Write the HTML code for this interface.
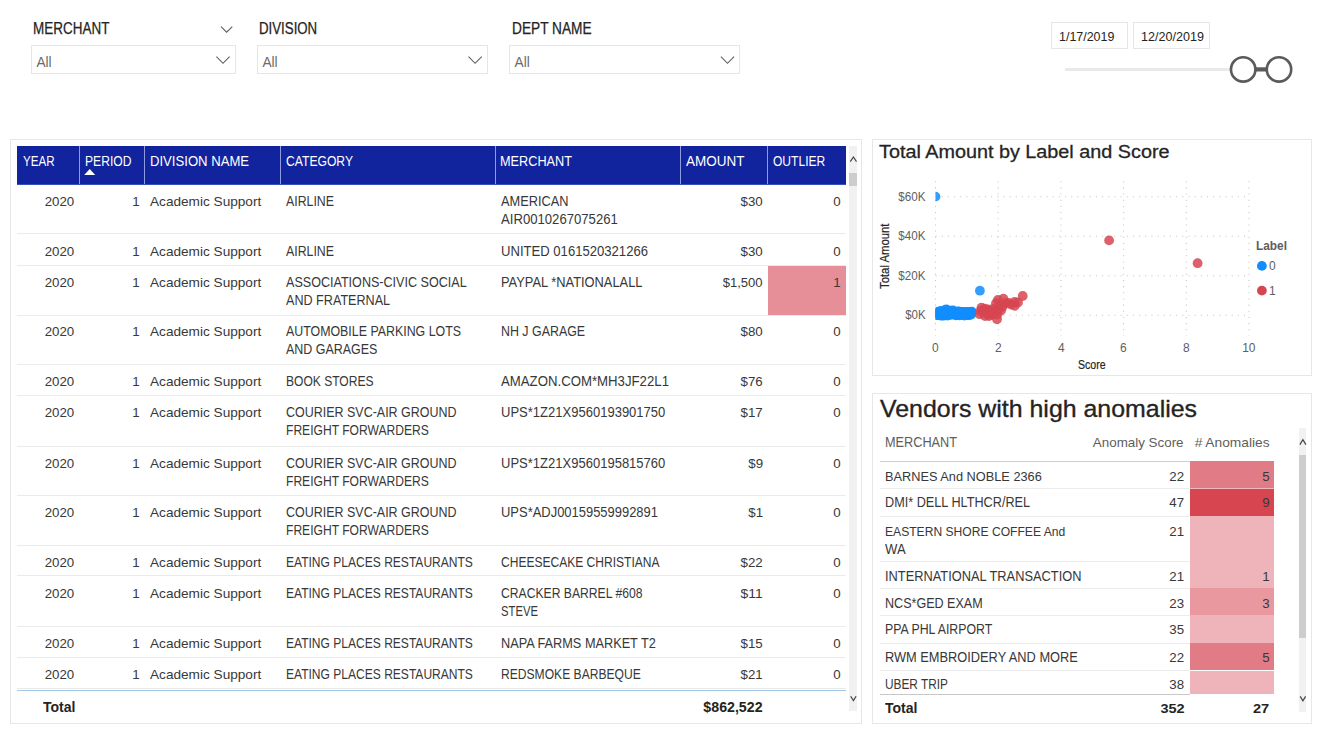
<!DOCTYPE html>
<html><head><meta charset="utf-8"><title>Anomaly dashboard</title>
<style>
html,body{margin:0;padding:0;background:#fff;}
body{width:1317px;height:736px;position:relative;overflow:hidden;font-family:"Liberation Sans",sans-serif;}
.t{position:absolute;white-space:pre;line-height:1;}
</style></head><body>
<div style="position:absolute;left:31.00px;top:45.20px;width:203.30px;height:26.50px;border:1px solid #e6e6e6;background:transparent;"></div>
<div style="position:absolute;left:257.00px;top:45.20px;width:229.00px;height:26.50px;border:1px solid #e6e6e6;background:transparent;"></div>
<div style="position:absolute;left:509.20px;top:45.20px;width:229.00px;height:26.50px;border:1px solid #e6e6e6;background:transparent;"></div>
<svg style="position:absolute;left:200px;top:20px" width="560" height="50" viewBox="200 20 560 50"><path d="M221 26.6 L226.65 32.2 L232.3 26.6" fill="none" stroke="#605e5c" stroke-width="1.1"/><path d="M216.4 56.7 L223.0 63.3 L229.6 56.7" fill="none" stroke="#605e5c" stroke-width="1.1"/><path d="M468.5 56.7 L475.1 63.3 L481.70000000000005 56.7" fill="none" stroke="#605e5c" stroke-width="1.1"/><path d="M720.9 56.7 L727.5 63.3 L734.1 56.7" fill="none" stroke="#605e5c" stroke-width="1.1"/></svg>
<div style="position:absolute;left:1050.60px;top:22.40px;width:75.00px;height:24.40px;border:1px solid #e6e6e6;background:transparent;"></div>
<div style="position:absolute;left:1133.10px;top:22.40px;width:74.90px;height:24.40px;border:1px solid #e6e6e6;background:transparent;"></div>
<svg style="position:absolute;left:1050px;top:50px" width="260" height="40" viewBox="1050 50 260 40"><rect x="1064.8" y="67.9" width="168" height="3.2" rx="1.6" fill="#e9e9e9"/><rect x="1254" y="67.3" width="14" height="4.2" fill="#5b5b5b"/><circle cx="1243.2" cy="69.4" r="12.2" fill="#fff" stroke="#5b5b5b" stroke-width="2.6"/><circle cx="1279.0" cy="69.4" r="12.2" fill="#fff" stroke="#5b5b5b" stroke-width="2.6"/></svg>
<div style="position:absolute;left:10.00px;top:139.20px;width:850.00px;height:583.20px;border:1px solid #e7e7e7;background:transparent;"></div>
<div style="position:absolute;left:17.40px;top:145.90px;width:828.60px;height:38.60px;background:#12239e;"></div>
<div style="position:absolute;left:17.40px;top:183.70px;width:828.60px;height:0.90px;background:#3550bd;"></div>
<div style="position:absolute;left:78.80px;top:145.90px;width:1.00px;height:38.60px;background:#8c9be2;"></div>
<div style="position:absolute;left:143.80px;top:145.90px;width:1.00px;height:38.60px;background:#8c9be2;"></div>
<div style="position:absolute;left:279.80px;top:145.90px;width:1.00px;height:38.60px;background:#8c9be2;"></div>
<div style="position:absolute;left:494.90px;top:145.90px;width:1.00px;height:38.60px;background:#8c9be2;"></div>
<div style="position:absolute;left:679.90px;top:145.90px;width:1.00px;height:38.60px;background:#8c9be2;"></div>
<div style="position:absolute;left:767.00px;top:145.90px;width:1.00px;height:38.60px;background:#8c9be2;"></div>
<svg style="position:absolute;left:80px;top:165px" width="20" height="12" viewBox="80 165 20 12"><path d="M84.2 175.1 L89.7 169.0 L95.2 175.1 Z" fill="#fff"/></svg>
<div style="position:absolute;left:17.40px;top:232.50px;width:828.60px;height:1.00px;background:#ebebeb;"></div>
<div style="position:absolute;left:17.40px;top:264.80px;width:828.60px;height:1.00px;background:#ebebeb;"></div>
<div style="position:absolute;left:767.50px;top:265.80px;width:78.50px;height:49.60px;background:#e78f98;"></div>
<div style="position:absolute;left:17.40px;top:314.90px;width:828.60px;height:1.00px;background:#ebebeb;"></div>
<div style="position:absolute;left:17.40px;top:364.00px;width:828.60px;height:1.00px;background:#ebebeb;"></div>
<div style="position:absolute;left:17.40px;top:394.90px;width:828.60px;height:1.00px;background:#ebebeb;"></div>
<div style="position:absolute;left:17.40px;top:446.00px;width:828.60px;height:1.00px;background:#ebebeb;"></div>
<div style="position:absolute;left:17.40px;top:495.10px;width:828.60px;height:1.00px;background:#ebebeb;"></div>
<div style="position:absolute;left:17.40px;top:544.80px;width:828.60px;height:1.00px;background:#ebebeb;"></div>
<div style="position:absolute;left:17.40px;top:574.80px;width:828.60px;height:1.00px;background:#ebebeb;"></div>
<div style="position:absolute;left:17.40px;top:625.70px;width:828.60px;height:1.00px;background:#ebebeb;"></div>
<div style="position:absolute;left:17.40px;top:656.50px;width:828.60px;height:1.00px;background:#ebebeb;"></div>
<div style="position:absolute;left:17.40px;top:687.80px;width:828.60px;height:1.00px;background:#e9e9e9;"></div>
<div style="position:absolute;left:17.40px;top:690.00px;width:828.60px;height:1.10px;background:#a3c7e8;"></div>
<div style="position:absolute;left:849.30px;top:146.00px;width:7.30px;height:565.40px;background:#f1f1f1;"></div>
<div style="position:absolute;left:849.30px;top:173.00px;width:7.30px;height:12.80px;background:#cdcdcd;"></div>
<svg style="position:absolute;left:845px;top:150px" width="16" height="560" viewBox="845 150 16 560"><path d="M850.3 161.6 L853.4 157.0 L856.5 161.6" fill="none" stroke="#444" stroke-width="1.2"/><path d="M850.7 696.3 L853.4 700.6 L856.1 696.3" fill="none" stroke="#444" stroke-width="1.2"/></svg>
<div style="position:absolute;left:872.20px;top:139.40px;width:437.60px;height:234.40px;border:1px solid #e7e7e7;background:transparent;"></div>
<svg style="position:absolute;left:873px;top:170px" width="438" height="200" viewBox="873 170 438 200"><line x1="935.50" y1="181.2" x2="935.50" y2="336.0" stroke="#c4c4c4" stroke-width="1.05" stroke-dasharray="1.05 5.12"/><line x1="998.20" y1="181.2" x2="998.20" y2="336.0" stroke="#c4c4c4" stroke-width="1.05" stroke-dasharray="1.05 5.12"/><line x1="1060.90" y1="181.2" x2="1060.90" y2="336.0" stroke="#c4c4c4" stroke-width="1.05" stroke-dasharray="1.05 5.12"/><line x1="1123.60" y1="181.2" x2="1123.60" y2="336.0" stroke="#c4c4c4" stroke-width="1.05" stroke-dasharray="1.05 5.12"/><line x1="1186.30" y1="181.2" x2="1186.30" y2="336.0" stroke="#c4c4c4" stroke-width="1.05" stroke-dasharray="1.05 5.12"/><line x1="1249.00" y1="181.2" x2="1249.00" y2="336.0" stroke="#c4c4c4" stroke-width="1.05" stroke-dasharray="1.05 5.12"/><line x1="935.5" y1="196.80" x2="1249.2" y2="196.80" stroke="#c4c4c4" stroke-width="1.05" stroke-dasharray="1.05 5.12"/><line x1="935.5" y1="236.30" x2="1249.2" y2="236.30" stroke="#c4c4c4" stroke-width="1.05" stroke-dasharray="1.05 5.12"/><line x1="935.5" y1="275.80" x2="1249.2" y2="275.80" stroke="#c4c4c4" stroke-width="1.05" stroke-dasharray="1.05 5.12"/><line x1="935.5" y1="315.30" x2="1249.2" y2="315.30" stroke="#c4c4c4" stroke-width="1.05" stroke-dasharray="1.05 5.12"/><clipPath id="cp"><rect x="935.5" y="170" width="330" height="180"/></clipPath><g clip-path="url(#cp)"><circle cx="935.5" cy="196.6" r="4.9" fill="#118dff" fill-opacity="0.85"/><circle cx="935.5" cy="315.2" r="4.9" fill="#118dff" fill-opacity="0.95"/><circle cx="936.1" cy="312.2" r="4.9" fill="#118dff" fill-opacity="0.95"/><circle cx="937.2" cy="314.8" r="4.9" fill="#118dff" fill-opacity="0.95"/><circle cx="937.8" cy="312.2" r="4.9" fill="#118dff" fill-opacity="0.95"/><circle cx="938.9" cy="315.0" r="4.9" fill="#118dff" fill-opacity="0.95"/><circle cx="939.5" cy="312.0" r="4.9" fill="#118dff" fill-opacity="0.95"/><circle cx="940.6" cy="315.5" r="4.9" fill="#118dff" fill-opacity="0.95"/><circle cx="941.2" cy="311.8" r="4.9" fill="#118dff" fill-opacity="0.95"/><circle cx="942.3" cy="315.6" r="4.9" fill="#118dff" fill-opacity="0.95"/><circle cx="942.9" cy="311.9" r="4.9" fill="#118dff" fill-opacity="0.95"/><circle cx="944.0" cy="315.5" r="4.9" fill="#118dff" fill-opacity="0.95"/><circle cx="944.6" cy="312.2" r="4.9" fill="#118dff" fill-opacity="0.95"/><circle cx="945.7" cy="315.1" r="4.9" fill="#118dff" fill-opacity="0.95"/><circle cx="946.3" cy="311.6" r="4.9" fill="#118dff" fill-opacity="0.95"/><circle cx="947.4" cy="315.5" r="4.9" fill="#118dff" fill-opacity="0.95"/><circle cx="948.0" cy="312.1" r="4.9" fill="#118dff" fill-opacity="0.95"/><circle cx="949.1" cy="314.8" r="4.9" fill="#118dff" fill-opacity="0.95"/><circle cx="949.7" cy="311.4" r="4.9" fill="#118dff" fill-opacity="0.95"/><circle cx="950.8" cy="314.9" r="4.9" fill="#118dff" fill-opacity="0.95"/><circle cx="951.4" cy="311.9" r="4.9" fill="#118dff" fill-opacity="0.95"/><circle cx="952.5" cy="314.4" r="4.9" fill="#118dff" fill-opacity="0.95"/><circle cx="953.1" cy="312.3" r="4.9" fill="#118dff" fill-opacity="0.95"/><circle cx="954.2" cy="314.6" r="4.9" fill="#118dff" fill-opacity="0.95"/><circle cx="954.8" cy="312.0" r="4.9" fill="#118dff" fill-opacity="0.95"/><circle cx="955.9" cy="315.4" r="4.9" fill="#118dff" fill-opacity="0.95"/><circle cx="956.5" cy="312.2" r="4.9" fill="#118dff" fill-opacity="0.95"/><circle cx="957.6" cy="315.2" r="4.9" fill="#118dff" fill-opacity="0.95"/><circle cx="958.2" cy="311.6" r="4.9" fill="#118dff" fill-opacity="0.95"/><circle cx="959.3" cy="315.4" r="4.9" fill="#118dff" fill-opacity="0.95"/><circle cx="959.9" cy="311.8" r="4.9" fill="#118dff" fill-opacity="0.95"/><circle cx="961.0" cy="314.8" r="4.9" fill="#118dff" fill-opacity="0.95"/><circle cx="961.6" cy="312.0" r="4.9" fill="#118dff" fill-opacity="0.95"/><circle cx="962.7" cy="314.9" r="4.9" fill="#118dff" fill-opacity="0.95"/><circle cx="963.3" cy="312.2" r="4.9" fill="#118dff" fill-opacity="0.95"/><circle cx="964.4" cy="315.5" r="4.9" fill="#118dff" fill-opacity="0.95"/><circle cx="965.0" cy="312.1" r="4.9" fill="#118dff" fill-opacity="0.95"/><circle cx="966.1" cy="314.8" r="4.9" fill="#118dff" fill-opacity="0.95"/><circle cx="966.7" cy="311.9" r="4.9" fill="#118dff" fill-opacity="0.95"/><circle cx="967.8" cy="315.2" r="4.9" fill="#118dff" fill-opacity="0.95"/><circle cx="968.4" cy="311.8" r="4.9" fill="#118dff" fill-opacity="0.95"/><circle cx="969.5" cy="315.1" r="4.9" fill="#118dff" fill-opacity="0.95"/><circle cx="970.1" cy="312.0" r="4.9" fill="#118dff" fill-opacity="0.95"/><circle cx="971.2" cy="314.6" r="4.9" fill="#118dff" fill-opacity="0.95"/><circle cx="971.8" cy="311.7" r="4.9" fill="#118dff" fill-opacity="0.95"/><circle cx="946.4" cy="309.3" r="4.9" fill="#118dff" fill-opacity="0.95"/><circle cx="945.2" cy="310.0" r="4.9" fill="#118dff" fill-opacity="0.95"/><circle cx="953.2" cy="310.4" r="4.9" fill="#118dff" fill-opacity="0.95"/><circle cx="951.0" cy="310.6" r="4.9" fill="#118dff" fill-opacity="0.95"/><circle cx="940.5" cy="311.0" r="4.9" fill="#118dff" fill-opacity="0.95"/><circle cx="958.5" cy="311.4" r="4.9" fill="#118dff" fill-opacity="0.95"/><circle cx="963.0" cy="312.3" r="4.9" fill="#118dff" fill-opacity="0.95"/><circle cx="968.0" cy="312.4" r="4.9" fill="#118dff" fill-opacity="0.95"/><circle cx="971.5" cy="312.2" r="4.9" fill="#118dff" fill-opacity="0.95"/><circle cx="979.9" cy="290.7" r="4.9" fill="#118dff" fill-opacity="0.85"/><circle cx="988.0" cy="309.5" r="4.9" fill="#d64550" fill-opacity="0.85"/><circle cx="984.8" cy="308.6" r="4.9" fill="#d64550" fill-opacity="0.85"/><circle cx="991.5" cy="314.8" r="4.9" fill="#d64550" fill-opacity="0.85"/><circle cx="979.7" cy="314.2" r="4.9" fill="#d64550" fill-opacity="0.85"/><circle cx="981.5" cy="307.6" r="4.9" fill="#d64550" fill-opacity="0.85"/><circle cx="980.5" cy="311.0" r="4.9" fill="#d64550" fill-opacity="0.85"/><circle cx="985.1" cy="316.0" r="4.9" fill="#d64550" fill-opacity="0.85"/><circle cx="984.0" cy="311.0" r="4.9" fill="#d64550" fill-opacity="0.85"/><circle cx="987.5" cy="313.5" r="4.9" fill="#d64550" fill-opacity="0.85"/><circle cx="990.6" cy="311.4" r="4.9" fill="#d64550" fill-opacity="0.85"/><circle cx="989.0" cy="316.0" r="4.9" fill="#d64550" fill-opacity="0.85"/><circle cx="993.0" cy="309.0" r="4.9" fill="#d64550" fill-opacity="0.85"/><circle cx="994.0" cy="313.0" r="4.9" fill="#d64550" fill-opacity="0.85"/><circle cx="996.0" cy="303.2" r="4.9" fill="#d64550" fill-opacity="0.85"/><circle cx="997.9" cy="300.0" r="4.9" fill="#d64550" fill-opacity="0.85"/><circle cx="997.0" cy="319.3" r="4.9" fill="#d64550" fill-opacity="0.85"/><circle cx="997.3" cy="314.5" r="4.9" fill="#d64550" fill-opacity="0.85"/><circle cx="997.9" cy="309.5" r="4.9" fill="#d64550" fill-opacity="0.85"/><circle cx="1000.5" cy="305.5" r="4.9" fill="#d64550" fill-opacity="0.85"/><circle cx="1003.4" cy="298.6" r="4.9" fill="#d64550" fill-opacity="0.85"/><circle cx="1002.5" cy="306.9" r="4.9" fill="#d64550" fill-opacity="0.85"/><circle cx="1001.0" cy="310.5" r="4.9" fill="#d64550" fill-opacity="0.85"/><circle cx="1005.5" cy="303.0" r="4.9" fill="#d64550" fill-opacity="0.85"/><circle cx="1008.8" cy="302.8" r="4.9" fill="#d64550" fill-opacity="0.85"/><circle cx="1011.0" cy="304.5" r="4.9" fill="#d64550" fill-opacity="0.85"/><circle cx="1014.7" cy="302.0" r="4.9" fill="#d64550" fill-opacity="0.85"/><circle cx="1014.7" cy="305.8" r="4.9" fill="#d64550" fill-opacity="0.85"/><circle cx="1018.0" cy="302.5" r="4.9" fill="#d64550" fill-opacity="0.85"/><circle cx="1022.7" cy="296.0" r="4.9" fill="#d64550" fill-opacity="0.85"/><circle cx="1109.1" cy="240.4" r="4.9" fill="#d64550" fill-opacity="0.85"/><circle cx="1197.6" cy="263.2" r="4.9" fill="#d64550" fill-opacity="0.85"/></g><circle cx="1261.9" cy="265.9" r="4.9" fill="#118dff" fill-opacity="1"/><circle cx="1261.9" cy="290.6" r="4.9" fill="#d64550" fill-opacity="1"/></svg>
<div style="position:absolute;left:872.20px;top:393.00px;width:437.60px;height:329.40px;border:1px solid #e7e7e7;background:transparent;"></div>
<div style="position:absolute;left:880.00px;top:460.80px;width:394.20px;height:1.00px;background:#cfcfcf;"></div>
<div style="position:absolute;left:1189.80px;top:461.30px;width:84.40px;height:27.30px;background:#e17c86;"></div>
<div style="position:absolute;left:880.00px;top:488.10px;width:309.80px;height:1.00px;background:#ececec;"></div>
<div style="position:absolute;left:1189.80px;top:488.10px;width:84.40px;height:1.00px;background:rgba(255,255,255,0.45);"></div>
<div style="position:absolute;left:1189.80px;top:488.60px;width:84.40px;height:27.60px;background:#d64550;"></div>
<div style="position:absolute;left:880.00px;top:515.70px;width:309.80px;height:1.00px;background:#ececec;"></div>
<div style="position:absolute;left:1189.80px;top:515.70px;width:84.40px;height:1.00px;background:rgba(255,255,255,0.45);"></div>
<div style="position:absolute;left:1189.80px;top:516.20px;width:84.40px;height:45.10px;background:#efb4b9;"></div>
<div style="position:absolute;left:880.00px;top:560.80px;width:309.80px;height:1.00px;background:#ececec;"></div>
<div style="position:absolute;left:1189.80px;top:560.80px;width:84.40px;height:1.00px;background:rgba(255,255,255,0.45);"></div>
<div style="position:absolute;left:1189.80px;top:561.30px;width:84.40px;height:27.10px;background:#efb4b9;"></div>
<div style="position:absolute;left:880.00px;top:587.90px;width:309.80px;height:1.00px;background:#ececec;"></div>
<div style="position:absolute;left:1189.80px;top:587.90px;width:84.40px;height:1.00px;background:rgba(255,255,255,0.45);"></div>
<div style="position:absolute;left:1189.80px;top:588.40px;width:84.40px;height:27.00px;background:#e9989f;"></div>
<div style="position:absolute;left:880.00px;top:614.90px;width:309.80px;height:1.00px;background:#ececec;"></div>
<div style="position:absolute;left:1189.80px;top:614.90px;width:84.40px;height:1.00px;background:rgba(255,255,255,0.45);"></div>
<div style="position:absolute;left:1189.80px;top:615.40px;width:84.40px;height:27.70px;background:#efb4b9;"></div>
<div style="position:absolute;left:880.00px;top:642.60px;width:309.80px;height:1.00px;background:#ececec;"></div>
<div style="position:absolute;left:1189.80px;top:642.60px;width:84.40px;height:1.00px;background:rgba(255,255,255,0.45);"></div>
<div style="position:absolute;left:1189.80px;top:643.10px;width:84.40px;height:27.40px;background:#e17c86;"></div>
<div style="position:absolute;left:880.00px;top:670.00px;width:309.80px;height:1.00px;background:#ececec;"></div>
<div style="position:absolute;left:1189.80px;top:670.00px;width:84.40px;height:1.00px;background:rgba(255,255,255,0.45);"></div>
<div style="position:absolute;left:1189.80px;top:670.50px;width:84.40px;height:23.70px;background:#efb4b9;"></div>
<div style="position:absolute;left:880.00px;top:693.60px;width:309.80px;height:1.40px;background:#c8c8c8;"></div>
<div style="position:absolute;left:1298.60px;top:427.70px;width:7.40px;height:284.30px;background:#f1f1f1;"></div>
<div style="position:absolute;left:1298.60px;top:455.10px;width:7.40px;height:182.70px;background:#cdcdcd;"></div>
<svg style="position:absolute;left:1295px;top:430px" width="16" height="280" viewBox="1295 430 16 280"><path d="M1299.9 444.6 L1302.9 439.6 L1305.9 444.6" fill="none" stroke="#444" stroke-width="1.2"/><path d="M1300.2 696.4 L1302.9 700.9 L1305.6 696.4" fill="none" stroke="#444" stroke-width="1.2"/></svg>
<span class="t" style="top:21.08px;font-size:15.6px;color:#252423;-webkit-text-stroke:0.25px #252423;left:33.40px;transform-origin:0 0;transform:scaleX(0.8645);">MERCHANT</span>
<span class="t" style="top:21.08px;font-size:15.6px;color:#252423;-webkit-text-stroke:0.25px #252423;left:259.40px;transform-origin:0 0;transform:scaleX(0.8502);">DIVISION</span>
<span class="t" style="top:21.08px;font-size:15.6px;color:#252423;-webkit-text-stroke:0.25px #252423;left:511.90px;transform-origin:0 0;transform:scaleX(0.8776);">DEPT NAME</span>
<span class="t" style="top:56.08px;font-size:13.72px;color:#6b6b6b;left:36.40px;transform-origin:0 0;transform:scaleX(1.0000);">All</span>
<span class="t" style="top:56.08px;font-size:13.72px;color:#6b6b6b;left:262.40px;transform-origin:0 0;transform:scaleX(1.0000);">All</span>
<span class="t" style="top:56.08px;font-size:13.72px;color:#6b6b6b;left:514.60px;transform-origin:0 0;transform:scaleX(1.0000);">All</span>
<span class="t" style="top:31.08px;font-size:12.2px;color:#252423;left:1058.60px;transform-origin:0 0;transform:scaleX(1.0218);">1/17/2019</span>
<span class="t" style="top:31.08px;font-size:12.2px;color:#252423;left:1140.80px;transform-origin:0 0;transform:scaleX(1.0307);">12/20/2019</span>
<span class="t" style="top:155.08px;font-size:13.9px;color:#fff;left:22.80px;transform-origin:0 0;transform:scaleX(0.8348);">YEAR</span>
<span class="t" style="top:155.08px;font-size:13.9px;color:#fff;left:84.60px;transform-origin:0 0;transform:scaleX(0.8718);">PERIOD</span>
<span class="t" style="top:155.08px;font-size:13.9px;color:#fff;left:150.00px;transform-origin:0 0;transform:scaleX(0.9443);">DIVISION NAME</span>
<span class="t" style="top:155.08px;font-size:13.9px;color:#fff;left:286.00px;transform-origin:0 0;transform:scaleX(0.8741);">CATEGORY</span>
<span class="t" style="top:155.08px;font-size:13.9px;color:#fff;left:500.40px;transform-origin:0 0;transform:scaleX(0.9146);">MERCHANT</span>
<span class="t" style="top:155.08px;font-size:13.9px;color:#fff;left:686.00px;transform-origin:0 0;transform:scaleX(0.9698);">AMOUNT</span>
<span class="t" style="top:155.08px;font-size:13.9px;color:#fff;left:772.80px;transform-origin:0 0;transform:scaleX(0.8673);">OUTLIER</span>
<span class="t" style="top:195.08px;font-size:13.6px;color:#383838;right:1242.40px;transform-origin:100% 0;transform:scaleX(0.9778);">2020</span>
<span class="t" style="top:195.08px;font-size:13.6px;color:#383838;right:1177.60px;transform-origin:100% 0;transform:scaleX(0.9778);">1</span>
<span class="t" style="top:195.08px;font-size:13.5px;color:#383838;left:150.20px;transform-origin:0 0;transform:scaleX(1.0085);">Academic Support</span>
<span class="t" style="top:195.08px;font-size:13.9px;color:#383838;left:286.30px;transform-origin:0 0;transform:scaleX(0.8884);">AIRLINE</span>
<span class="t" style="top:195.08px;font-size:13.9px;color:#383838;left:501.20px;transform-origin:0 0;transform:scaleX(0.9214);">AMERICAN</span>
<span class="t" style="top:213.08px;font-size:13.9px;color:#383838;left:501.20px;transform-origin:0 0;transform:scaleX(0.9453);">AIR0010267075261</span>
<span class="t" style="top:195.08px;font-size:13.6px;color:#383838;right:554.30px;transform-origin:100% 0;transform:scaleX(0.9778);">$30</span>
<span class="t" style="top:195.08px;font-size:13.6px;color:#383838;right:476.40px;transform-origin:100% 0;transform:scaleX(0.9778);">0</span>
<span class="t" style="top:245.08px;font-size:13.6px;color:#383838;right:1242.40px;transform-origin:100% 0;transform:scaleX(0.9778);">2020</span>
<span class="t" style="top:245.08px;font-size:13.6px;color:#383838;right:1177.60px;transform-origin:100% 0;transform:scaleX(0.9778);">1</span>
<span class="t" style="top:245.08px;font-size:13.5px;color:#383838;left:150.20px;transform-origin:0 0;transform:scaleX(1.0085);">Academic Support</span>
<span class="t" style="top:245.08px;font-size:13.9px;color:#383838;left:286.30px;transform-origin:0 0;transform:scaleX(0.8884);">AIRLINE</span>
<span class="t" style="top:245.08px;font-size:13.9px;color:#383838;left:501.20px;transform-origin:0 0;transform:scaleX(0.9421);">UNITED 0161520321266</span>
<span class="t" style="top:245.08px;font-size:13.6px;color:#383838;right:554.30px;transform-origin:100% 0;transform:scaleX(0.9778);">$30</span>
<span class="t" style="top:245.08px;font-size:13.6px;color:#383838;right:476.40px;transform-origin:100% 0;transform:scaleX(0.9778);">0</span>
<span class="t" style="top:276.08px;font-size:13.6px;color:#383838;right:1242.40px;transform-origin:100% 0;transform:scaleX(0.9778);">2020</span>
<span class="t" style="top:276.08px;font-size:13.6px;color:#383838;right:1177.60px;transform-origin:100% 0;transform:scaleX(0.9778);">1</span>
<span class="t" style="top:276.08px;font-size:13.5px;color:#383838;left:150.20px;transform-origin:0 0;transform:scaleX(1.0085);">Academic Support</span>
<span class="t" style="top:276.08px;font-size:13.9px;color:#383838;left:286.30px;transform-origin:0 0;transform:scaleX(0.9047);">ASSOCIATIONS-CIVIC SOCIAL</span>
<span class="t" style="top:294.08px;font-size:13.9px;color:#383838;left:286.30px;transform-origin:0 0;transform:scaleX(0.9075);">AND FRATERNAL</span>
<span class="t" style="top:276.08px;font-size:13.9px;color:#383838;left:501.20px;transform-origin:0 0;transform:scaleX(0.9252);">PAYPAL *NATIONALALL</span>
<span class="t" style="top:276.08px;font-size:13.6px;color:#383838;right:554.30px;transform-origin:100% 0;transform:scaleX(0.9608);">$1,500</span>
<span class="t" style="top:276.08px;font-size:13.6px;color:#383838;right:476.40px;transform-origin:100% 0;transform:scaleX(0.9778);">1</span>
<span class="t" style="top:325.08px;font-size:13.6px;color:#383838;right:1242.40px;transform-origin:100% 0;transform:scaleX(0.9778);">2020</span>
<span class="t" style="top:325.08px;font-size:13.6px;color:#383838;right:1177.60px;transform-origin:100% 0;transform:scaleX(0.9778);">1</span>
<span class="t" style="top:325.08px;font-size:13.5px;color:#383838;left:150.20px;transform-origin:0 0;transform:scaleX(1.0085);">Academic Support</span>
<span class="t" style="top:325.08px;font-size:13.9px;color:#383838;left:286.30px;transform-origin:0 0;transform:scaleX(0.8913);">AUTOMOBILE PARKING LOTS</span>
<span class="t" style="top:343.08px;font-size:13.9px;color:#383838;left:286.30px;transform-origin:0 0;transform:scaleX(0.8974);">AND GARAGES</span>
<span class="t" style="top:325.08px;font-size:13.9px;color:#383838;left:501.20px;transform-origin:0 0;transform:scaleX(0.8929);">NH J GARAGE</span>
<span class="t" style="top:325.08px;font-size:13.6px;color:#383838;right:554.30px;transform-origin:100% 0;transform:scaleX(0.9778);">$80</span>
<span class="t" style="top:325.08px;font-size:13.6px;color:#383838;right:476.40px;transform-origin:100% 0;transform:scaleX(0.9778);">0</span>
<span class="t" style="top:375.08px;font-size:13.6px;color:#383838;right:1242.40px;transform-origin:100% 0;transform:scaleX(0.9778);">2020</span>
<span class="t" style="top:375.08px;font-size:13.6px;color:#383838;right:1177.60px;transform-origin:100% 0;transform:scaleX(0.9778);">1</span>
<span class="t" style="top:375.08px;font-size:13.5px;color:#383838;left:150.20px;transform-origin:0 0;transform:scaleX(1.0085);">Academic Support</span>
<span class="t" style="top:375.08px;font-size:13.9px;color:#383838;left:286.30px;transform-origin:0 0;transform:scaleX(0.8675);">BOOK STORES</span>
<span class="t" style="top:375.08px;font-size:13.9px;color:#383838;left:501.20px;transform-origin:0 0;transform:scaleX(0.9503);">AMAZON.COM*MH3JF22L1</span>
<span class="t" style="top:375.08px;font-size:13.6px;color:#383838;right:554.30px;transform-origin:100% 0;transform:scaleX(0.9778);">$76</span>
<span class="t" style="top:375.08px;font-size:13.6px;color:#383838;right:476.40px;transform-origin:100% 0;transform:scaleX(0.9778);">0</span>
<span class="t" style="top:406.08px;font-size:13.6px;color:#383838;right:1242.40px;transform-origin:100% 0;transform:scaleX(0.9778);">2020</span>
<span class="t" style="top:406.08px;font-size:13.6px;color:#383838;right:1177.60px;transform-origin:100% 0;transform:scaleX(0.9778);">1</span>
<span class="t" style="top:406.08px;font-size:13.5px;color:#383838;left:150.20px;transform-origin:0 0;transform:scaleX(1.0085);">Academic Support</span>
<span class="t" style="top:406.08px;font-size:13.9px;color:#383838;left:286.30px;transform-origin:0 0;transform:scaleX(0.8982);">COURIER SVC-AIR GROUND</span>
<span class="t" style="top:424.08px;font-size:13.9px;color:#383838;left:286.30px;transform-origin:0 0;transform:scaleX(0.8697);">FREIGHT FORWARDERS</span>
<span class="t" style="top:406.08px;font-size:13.9px;color:#383838;left:501.20px;transform-origin:0 0;transform:scaleX(0.9373);">UPS*1Z21X9560193901750</span>
<span class="t" style="top:406.08px;font-size:13.6px;color:#383838;right:554.30px;transform-origin:100% 0;transform:scaleX(0.9778);">$17</span>
<span class="t" style="top:406.08px;font-size:13.6px;color:#383838;right:476.40px;transform-origin:100% 0;transform:scaleX(0.9778);">0</span>
<span class="t" style="top:457.08px;font-size:13.6px;color:#383838;right:1242.40px;transform-origin:100% 0;transform:scaleX(0.9778);">2020</span>
<span class="t" style="top:457.08px;font-size:13.6px;color:#383838;right:1177.60px;transform-origin:100% 0;transform:scaleX(0.9778);">1</span>
<span class="t" style="top:457.08px;font-size:13.5px;color:#383838;left:150.20px;transform-origin:0 0;transform:scaleX(1.0085);">Academic Support</span>
<span class="t" style="top:457.08px;font-size:13.9px;color:#383838;left:286.30px;transform-origin:0 0;transform:scaleX(0.8982);">COURIER SVC-AIR GROUND</span>
<span class="t" style="top:475.08px;font-size:13.9px;color:#383838;left:286.30px;transform-origin:0 0;transform:scaleX(0.8697);">FREIGHT FORWARDERS</span>
<span class="t" style="top:457.08px;font-size:13.9px;color:#383838;left:501.20px;transform-origin:0 0;transform:scaleX(0.9373);">UPS*1Z21X9560195815760</span>
<span class="t" style="top:457.08px;font-size:13.6px;color:#383838;right:554.30px;transform-origin:100% 0;transform:scaleX(0.9778);">$9</span>
<span class="t" style="top:457.08px;font-size:13.6px;color:#383838;right:476.40px;transform-origin:100% 0;transform:scaleX(0.9778);">0</span>
<span class="t" style="top:506.08px;font-size:13.6px;color:#383838;right:1242.40px;transform-origin:100% 0;transform:scaleX(0.9778);">2020</span>
<span class="t" style="top:506.08px;font-size:13.6px;color:#383838;right:1177.60px;transform-origin:100% 0;transform:scaleX(0.9778);">1</span>
<span class="t" style="top:506.08px;font-size:13.5px;color:#383838;left:150.20px;transform-origin:0 0;transform:scaleX(1.0085);">Academic Support</span>
<span class="t" style="top:506.08px;font-size:13.9px;color:#383838;left:286.30px;transform-origin:0 0;transform:scaleX(0.8982);">COURIER SVC-AIR GROUND</span>
<span class="t" style="top:524.08px;font-size:13.9px;color:#383838;left:286.30px;transform-origin:0 0;transform:scaleX(0.8697);">FREIGHT FORWARDERS</span>
<span class="t" style="top:506.08px;font-size:13.9px;color:#383838;left:501.20px;transform-origin:0 0;transform:scaleX(0.9324);">UPS*ADJ00159559992891</span>
<span class="t" style="top:506.08px;font-size:13.6px;color:#383838;right:554.30px;transform-origin:100% 0;transform:scaleX(0.9778);">$1</span>
<span class="t" style="top:506.08px;font-size:13.6px;color:#383838;right:476.40px;transform-origin:100% 0;transform:scaleX(0.9778);">0</span>
<span class="t" style="top:556.08px;font-size:13.6px;color:#383838;right:1242.40px;transform-origin:100% 0;transform:scaleX(0.9778);">2020</span>
<span class="t" style="top:556.08px;font-size:13.6px;color:#383838;right:1177.60px;transform-origin:100% 0;transform:scaleX(0.9778);">1</span>
<span class="t" style="top:556.08px;font-size:13.5px;color:#383838;left:150.20px;transform-origin:0 0;transform:scaleX(1.0085);">Academic Support</span>
<span class="t" style="top:556.08px;font-size:13.9px;color:#383838;left:286.30px;transform-origin:0 0;transform:scaleX(0.8669);">EATING PLACES RESTAURANTS</span>
<span class="t" style="top:556.08px;font-size:13.9px;color:#383838;left:501.20px;transform-origin:0 0;transform:scaleX(0.8665);">CHEESECAKE CHRISTIANA</span>
<span class="t" style="top:556.08px;font-size:13.6px;color:#383838;right:554.30px;transform-origin:100% 0;transform:scaleX(0.9778);">$22</span>
<span class="t" style="top:556.08px;font-size:13.6px;color:#383838;right:476.40px;transform-origin:100% 0;transform:scaleX(0.9778);">0</span>
<span class="t" style="top:587.08px;font-size:13.6px;color:#383838;right:1242.40px;transform-origin:100% 0;transform:scaleX(0.9778);">2020</span>
<span class="t" style="top:587.08px;font-size:13.6px;color:#383838;right:1177.60px;transform-origin:100% 0;transform:scaleX(0.9778);">1</span>
<span class="t" style="top:587.08px;font-size:13.5px;color:#383838;left:150.20px;transform-origin:0 0;transform:scaleX(1.0085);">Academic Support</span>
<span class="t" style="top:587.08px;font-size:13.9px;color:#383838;left:286.30px;transform-origin:0 0;transform:scaleX(0.8669);">EATING PLACES RESTAURANTS</span>
<span class="t" style="top:587.08px;font-size:13.9px;color:#383838;left:501.20px;transform-origin:0 0;transform:scaleX(0.8754);">CRACKER BARREL #608</span>
<span class="t" style="top:605.08px;font-size:13.9px;color:#383838;left:501.20px;transform-origin:0 0;transform:scaleX(0.8099);">STEVE</span>
<span class="t" style="top:587.08px;font-size:13.6px;color:#383838;right:554.30px;transform-origin:100% 0;transform:scaleX(1.0236);">$11</span>
<span class="t" style="top:587.08px;font-size:13.6px;color:#383838;right:476.40px;transform-origin:100% 0;transform:scaleX(0.9778);">0</span>
<span class="t" style="top:637.08px;font-size:13.6px;color:#383838;right:1242.40px;transform-origin:100% 0;transform:scaleX(0.9778);">2020</span>
<span class="t" style="top:637.08px;font-size:13.6px;color:#383838;right:1177.60px;transform-origin:100% 0;transform:scaleX(0.9778);">1</span>
<span class="t" style="top:637.08px;font-size:13.5px;color:#383838;left:150.20px;transform-origin:0 0;transform:scaleX(1.0085);">Academic Support</span>
<span class="t" style="top:637.08px;font-size:13.9px;color:#383838;left:286.30px;transform-origin:0 0;transform:scaleX(0.8669);">EATING PLACES RESTAURANTS</span>
<span class="t" style="top:637.08px;font-size:13.9px;color:#383838;left:501.20px;transform-origin:0 0;transform:scaleX(0.9158);">NAPA FARMS MARKET T2</span>
<span class="t" style="top:637.08px;font-size:13.6px;color:#383838;right:554.30px;transform-origin:100% 0;transform:scaleX(0.9778);">$15</span>
<span class="t" style="top:637.08px;font-size:13.6px;color:#383838;right:476.40px;transform-origin:100% 0;transform:scaleX(0.9778);">0</span>
<span class="t" style="top:668.08px;font-size:13.6px;color:#383838;right:1242.40px;transform-origin:100% 0;transform:scaleX(0.9778);">2020</span>
<span class="t" style="top:668.08px;font-size:13.6px;color:#383838;right:1177.60px;transform-origin:100% 0;transform:scaleX(0.9778);">1</span>
<span class="t" style="top:668.08px;font-size:13.5px;color:#383838;left:150.20px;transform-origin:0 0;transform:scaleX(1.0085);">Academic Support</span>
<span class="t" style="top:668.08px;font-size:13.9px;color:#383838;left:286.30px;transform-origin:0 0;transform:scaleX(0.8669);">EATING PLACES RESTAURANTS</span>
<span class="t" style="top:668.08px;font-size:13.9px;color:#383838;left:501.20px;transform-origin:0 0;transform:scaleX(0.8707);">REDSMOKE BARBEQUE</span>
<span class="t" style="top:668.08px;font-size:13.6px;color:#383838;right:554.30px;transform-origin:100% 0;transform:scaleX(0.9778);">$21</span>
<span class="t" style="top:668.08px;font-size:13.6px;color:#383838;right:476.40px;transform-origin:100% 0;transform:scaleX(0.9778);">0</span>
<span class="t" style="top:701.08px;font-size:13.8px;color:#252423;font-weight:700;left:42.60px;transform-origin:0 0;transform:scaleX(1.0145);">Total</span>
<span class="t" style="top:701.08px;font-size:13.8px;color:#252423;font-weight:700;right:554.20px;transform-origin:100% 0;transform:scaleX(1.0287);">$862,522</span>
<span class="t" style="top:143.08px;font-size:18.7px;color:#252423;-webkit-text-stroke:0.3px #252423;left:879.20px;transform-origin:0 0;transform:scaleX(1.0592);">Total Amount by Label and Score</span>
<span class="t" style="top:191.08px;font-size:12.2px;color:#605e5c;right:391.20px;transform-origin:100% 0;transform:scaleX(0.9528);">$60K</span>
<span class="t" style="top:230.08px;font-size:12.2px;color:#605e5c;right:391.20px;transform-origin:100% 0;transform:scaleX(0.9528);">$40K</span>
<span class="t" style="top:270.08px;font-size:12.2px;color:#605e5c;right:391.20px;transform-origin:100% 0;transform:scaleX(0.9528);">$20K</span>
<span class="t" style="top:309.08px;font-size:12.2px;color:#605e5c;right:391.20px;transform-origin:100% 0;transform:scaleX(0.9439);">$0K</span>
<span class="t" style="top:342.08px;font-size:12.2px;color:#605e5c;left:932.11px;transform-origin:50% 0;transform:scaleX(0.9814);">0</span>
<span class="t" style="top:342.08px;font-size:12.2px;color:#605e5c;left:994.81px;transform-origin:50% 0;transform:scaleX(0.9814);">2</span>
<span class="t" style="top:342.08px;font-size:12.2px;color:#605e5c;left:1057.51px;transform-origin:50% 0;transform:scaleX(0.9814);">4</span>
<span class="t" style="top:342.08px;font-size:12.2px;color:#605e5c;left:1120.21px;transform-origin:50% 0;transform:scaleX(0.9814);">6</span>
<span class="t" style="top:342.08px;font-size:12.2px;color:#605e5c;left:1182.91px;transform-origin:50% 0;transform:scaleX(0.9814);">8</span>
<span class="t" style="top:342.08px;font-size:12.2px;color:#605e5c;left:1242.22px;transform-origin:50% 0;transform:scaleX(0.9814);">10</span>
<span class="t" style="top:359.08px;font-size:12.4px;color:#252423;-webkit-text-stroke:0.2px #252423;left:1078.20px;transform-origin:0 0;transform:scaleX(0.8525);">Score</span>
<span class="t" style="left:879.00px;top:288.75px;font-size:12.4px;color:#252423;-webkit-text-stroke:0.2px #252423;transform-origin:0 0;transform:rotate(-90deg) scaleX(0.9143);">Total Amount</span>
<span class="t" style="top:240.08px;font-size:12.2px;color:#605e5c;font-weight:700;left:1256.00px;transform-origin:0 0;transform:scaleX(0.9735);">Label</span>
<span class="t" style="top:260.08px;font-size:12.2px;color:#605e5c;left:1268.60px;transform-origin:0 0;transform:scaleX(0.9814);">0</span>
<span class="t" style="top:285.08px;font-size:12.2px;color:#605e5c;left:1268.60px;transform-origin:0 0;transform:scaleX(0.9814);">1</span>
<span class="t" style="top:397.08px;font-size:24.3px;color:#252423;-webkit-text-stroke:0.35px #252423;left:879.80px;transform-origin:0 0;transform:scaleX(1.0249);">Vendors with high anomalies</span>
<span class="t" style="top:436.08px;font-size:13.9px;color:#605e5c;left:884.80px;transform-origin:0 0;transform:scaleX(0.9146);">MERCHANT</span>
<span class="t" style="top:436.08px;font-size:13.5px;color:#605e5c;right:133.00px;transform-origin:100% 0;transform:scaleX(0.9908);">Anomaly Score</span>
<span class="t" style="top:436.08px;font-size:13.5px;color:#605e5c;right:47.40px;transform-origin:100% 0;transform:scaleX(1.0186);"># Anomalies</span>
<span class="t" style="top:470.08px;font-size:13.6px;color:#383838;left:884.80px;transform-origin:0 0;transform:scaleX(0.9389);">BARNES And NOBLE 2366</span>
<span class="t" style="top:470.08px;font-size:13.6px;color:#383838;right:132.80px;transform-origin:100% 0;transform:scaleX(0.9778);">22</span>
<span class="t" style="top:470.08px;font-size:13.6px;color:#383838;right:47.40px;transform-origin:100% 0;transform:scaleX(0.9778);">5</span>
<span class="t" style="top:496.08px;font-size:13.9px;color:#383838;left:884.80px;transform-origin:0 0;transform:scaleX(0.9124);">DMI* DELL HLTHCR/REL</span>
<span class="t" style="top:496.08px;font-size:13.6px;color:#383838;right:132.80px;transform-origin:100% 0;transform:scaleX(0.9778);">47</span>
<span class="t" style="top:496.08px;font-size:13.6px;color:#383838;right:47.40px;transform-origin:100% 0;transform:scaleX(0.9778);">9</span>
<span class="t" style="top:525.08px;font-size:13.6px;color:#383838;left:884.80px;transform-origin:0 0;transform:scaleX(0.8903);">EASTERN SHORE COFFEE And</span>
<span class="t" style="top:543.08px;font-size:13.9px;color:#383838;left:884.80px;transform-origin:0 0;transform:scaleX(0.9445);">WA</span>
<span class="t" style="top:525.08px;font-size:13.6px;color:#383838;right:132.80px;transform-origin:100% 0;transform:scaleX(0.9778);">21</span>
<span class="t" style="top:570.08px;font-size:13.9px;color:#383838;left:884.80px;transform-origin:0 0;transform:scaleX(0.9233);">INTERNATIONAL TRANSACTION</span>
<span class="t" style="top:570.08px;font-size:13.6px;color:#383838;right:132.80px;transform-origin:100% 0;transform:scaleX(0.9778);">21</span>
<span class="t" style="top:570.08px;font-size:13.6px;color:#383838;right:47.40px;transform-origin:100% 0;transform:scaleX(0.9778);">1</span>
<span class="t" style="top:597.08px;font-size:13.9px;color:#383838;left:884.80px;transform-origin:0 0;transform:scaleX(0.9040);">NCS*GED EXAM</span>
<span class="t" style="top:597.08px;font-size:13.6px;color:#383838;right:132.80px;transform-origin:100% 0;transform:scaleX(0.9778);">23</span>
<span class="t" style="top:597.08px;font-size:13.6px;color:#383838;right:47.40px;transform-origin:100% 0;transform:scaleX(0.9778);">3</span>
<span class="t" style="top:623.08px;font-size:13.9px;color:#383838;left:884.80px;transform-origin:0 0;transform:scaleX(0.8866);">PPA PHL AIRPORT</span>
<span class="t" style="top:623.08px;font-size:13.6px;color:#383838;right:132.80px;transform-origin:100% 0;transform:scaleX(0.9778);">35</span>
<span class="t" style="top:651.08px;font-size:13.9px;color:#383838;left:884.80px;transform-origin:0 0;transform:scaleX(0.9218);">RWM EMBROIDERY AND MORE</span>
<span class="t" style="top:651.08px;font-size:13.6px;color:#383838;right:132.80px;transform-origin:100% 0;transform:scaleX(0.9778);">22</span>
<span class="t" style="top:651.08px;font-size:13.6px;color:#383838;right:47.40px;transform-origin:100% 0;transform:scaleX(0.9778);">5</span>
<span class="t" style="top:678.08px;font-size:13.9px;color:#383838;left:884.80px;transform-origin:0 0;transform:scaleX(0.8520);">UBER TRIP</span>
<span class="t" style="top:678.08px;font-size:13.6px;color:#383838;right:132.80px;transform-origin:100% 0;transform:scaleX(0.9778);">38</span>
<span class="t" style="top:702.08px;font-size:13.8px;color:#252423;font-weight:700;left:885.20px;transform-origin:0 0;transform:scaleX(1.0145);">Total</span>
<span class="t" style="top:702.08px;font-size:13.6px;color:#252423;font-weight:700;right:132.60px;transform-origin:100% 0;transform:scaleX(1.0667);">352</span>
<span class="t" style="top:702.08px;font-size:13.6px;color:#252423;font-weight:700;right:47.40px;transform-origin:100% 0;transform:scaleX(1.0711);">27</span>
</body></html>
